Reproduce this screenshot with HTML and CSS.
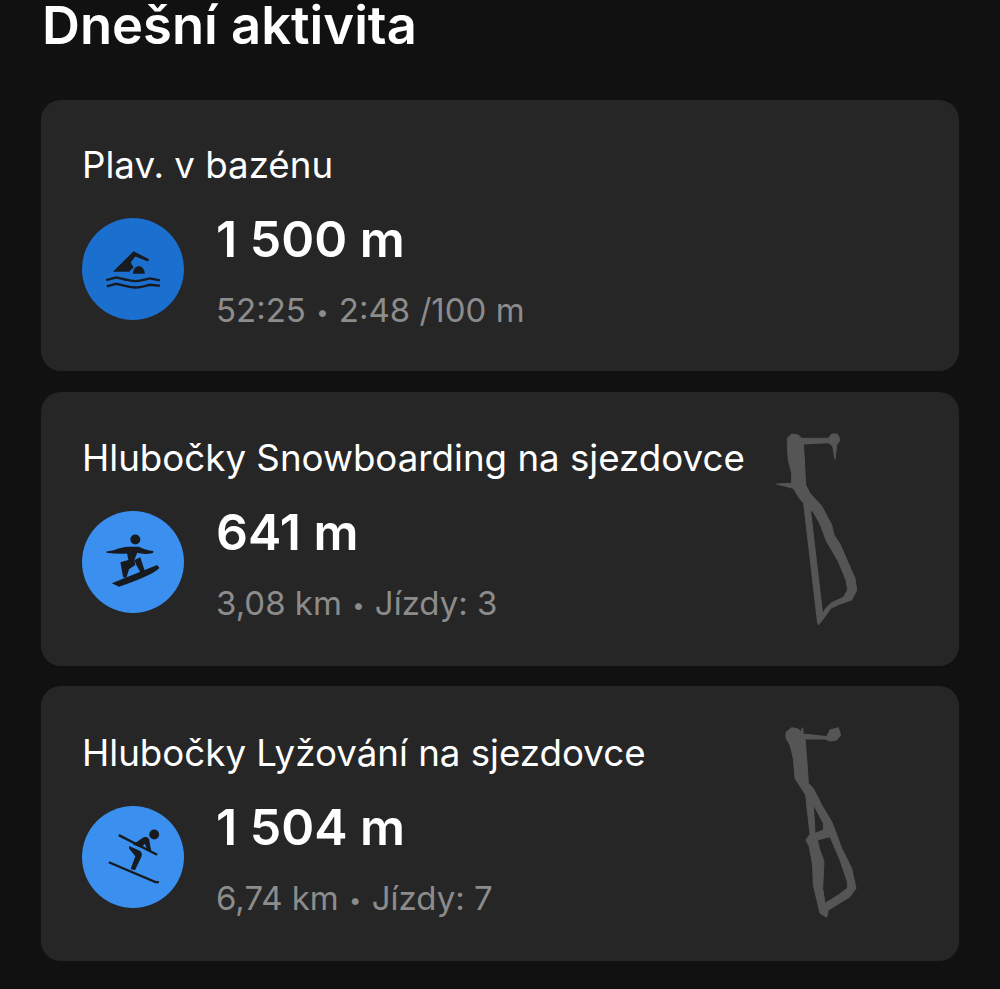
FILE: index.html
```html
<!DOCTYPE html>
<html lang="cs">
<head>
    <meta charset="UTF-8">
    <title>Dnešní aktivita</title>
    <link rel="stylesheet" href="styles.css">
</head>
<body>
    <h1 class="page-title">Dnešní aktivita</h1>

    <div class="card card-short">
        <div class="card-main">
            <div class="card-name">Plav. v bazénu</div>
            <div class="card-row">
                <svg class="icon icon-dark" viewBox="38 38 304 304">
                    <circle cx="190" cy="190" r="152" class="disc"/>
                    <path class="ink" d="M130 198 L192 137 L238 161 L235 168 L197 153 L183 170 L192 186 C184 190 180 198 180 198 Z"/>
                    <path class="ink" d="M190 204 C190 174 225 174 225 204 Z"/>
                    <path class="line" d="M110 223 L140 215 L170 222 C190 228 205 228 225 222 L240 218 L270 224"/>
                    <path class="line" d="M112 242 L140 234 L170 241 C190 247 205 247 225 241 L240 237 L270 240"/>
                </svg>
                <div>
                    <div class="card-value">1 500 m</div>
                    <div class="card-sub">52:25 <span class="dot">•</span> 2:48 /100 m</div>
                </div>
            </div>
        </div>
    </div>

    <div class="card">
        <div class="card-main">
            <div class="card-name">Hlubočky Snowboarding na sjezdovce</div>
            <div class="card-row">
                <svg class="icon" viewBox="36 32 308 308">
                    <circle cx="190" cy="186" r="154" class="disc"/>
                    <circle cx="197" cy="118" r="15" class="ink"/>
                    <path class="ink" d="M110 154 C135 152 155 140 175 140 L208 140 C220 146 235 151 252 153 L250 159 C232 163 215 162 203 158 L194 180 L197 195 L178 208 L170 234 L160 232 L152 187 L176 180 L172 160 C150 162 130 160 110 158 Z"/>
                    <path class="ink" d="M194 180 L212 172 L226 214 L212 217 L200 195 Z"/>
                    <path class="ink" d="M126 250 L263 195 L270 204 C245 226 200 242 148 261 Z"/>
                </svg>
                <div>
                    <div class="card-value">641 m</div>
                    <div class="card-sub">3,08 km <span class="dot">•</span> Jízdy: 3</div>
                </div>
            </div>
        </div>
        <svg class="track" viewBox="0 0 330 645">
            <path fill-rule="evenodd" d="M82 55 L95 42 L115 45 L125 55 L205 55 L215 42 L232 42 L240 60 L230 75 L225 118 L218 78 L205 68 L130 72 L133 115 L137 195 L150 220 L185 258 L215 315 L222 345 L240 372 L265 430 L285 475 L290 510 L275 540 L240 552 L212 565 L195 590 L175 615 L172 602 L131 250 L118 234 L100 205 L50 192 L95 190 L95 160 L85 120 L82 80 Z M151 268 L188 582 L197 565 L215 548 L250 532 L263 510 L258 480 L235 425 L212 385 L200 365 L180 312 L162 280 Z"/>
        </svg>
    </div>

    <div class="card">
        <div class="card-main">
            <div class="card-name">Hlubočky Lyžování na sjezdovce</div>
            <div class="card-row">
                <svg class="icon" viewBox="36 32 308 308">
                    <circle cx="190" cy="186" r="154" class="disc"/>
                    <circle cx="254" cy="118" r="15" class="ink"/>
                    <path class="line" d="M147 120 L263 179"/>
                    <path class="line" d="M117 202 L258 262 L268 262"/>
                    <path class="ink" d="M190 148 L222 126 C235 124 240 130 240 140 L245 168 L232 162 L226 146 L215 158 Z"/>
                    <path class="ink" d="M178 153 L212 168 C218 175 218 182 214 188 L196 226 L183 222 L197 184 L178 160 Z"/>
                </svg>
                <div>
                    <div class="card-value">1 504 m</div>
                    <div class="card-sub">6,74 km <span class="dot">•</span> Jízdy: 7</div>
                </div>
            </div>
        </div>
        <svg class="track" viewBox="0 0 330 645">
            <path fill-rule="evenodd" d="M78 52 L95 38 L115 42 L122 50 L128 38 L130 58 L160 60 L200 65 L210 45 L235 38 L242 60 L230 75 L210 78 L195 72 L135 72 L140 130 L145 205 L160 220 L185 270 L215 320 L225 345 L245 400 L275 460 L288 520 L270 545 L230 570 L205 585 L200 607 L180 595 L172 560 L160 510 L158 450 L148 395 L138 375 L150 358 L137 240 L105 190 L100 130 L90 90 L78 70 Z M160 268 L190 325 L190 345 L165 355 Z M172 375 L210 365 L240 435 L262 500 L262 520 L235 540 L195 565 L188 520 L192 440 L178 400 Z"/>
        </svg>
    </div>
</body>
</html>
```

FILE: styles.css
```css
body {
    background-color: #111111;
    color: #fff;
    font-family: Inter, "Liberation Sans", sans-serif;
    margin: 0;
    padding: 0 41px;
    height: 989px;
    overflow: hidden;
}
.page-title {
    margin: 0 0 0 1px;
    height: 100px;
    font-size: 52.5px;
    line-height: 50px;
    font-weight: 600;
}
.card {
    display: flex;
    justify-content: space-between;
    height: 274px;
    margin-bottom: 20px;
    padding: 0 89px 0 41px;
    background-color: #262626;
    border-radius: 20px;
    box-sizing: border-box;
}
.card:last-child {
    height: 275px;
    padding-top: 1px;
}
.card-short {
    height: 271px;
    margin-bottom: 21px;
}
.card-main {
    padding-top: 43px;
}
.card-short .card-main {
    padding-top: 42px;
}
.card-name {
    font-size: 36.7px;
    line-height: 46px;
    white-space: nowrap;
}
.card-row {
    display: flex;
    gap: 32px;
    margin-top: 30px;
}
.icon {
    flex: none;
    width: 102px;
    height: 102px;
}
.disc {
    fill: #3a8fef;
}
.icon-dark .disc {
    fill: #1b6fcf;
}
.ink {
    fill: #171b20;
}
.line {
    fill: none;
    stroke: #171b20;
    stroke-width: 7;
}
.card-value {
    font-size: 50px;
    line-height: 56px;
    font-weight: 600;
    margin-top: -7px;
}
.card-sub {
    font-size: 33px;
    line-height: 44px;
    color: #8c8c8c;
    margin-top: 21px;
}
.dot {
    font-size: 22px;
    vertical-align: 2px;
    margin: 0 1px;
}
.track {
    flex: none;
    width: 110px;
    height: 215px;
    margin-top: 28px;
    fill: #555;
    stroke: #555;
    stroke-width: 3;
    stroke-linejoin: round;
}
```
